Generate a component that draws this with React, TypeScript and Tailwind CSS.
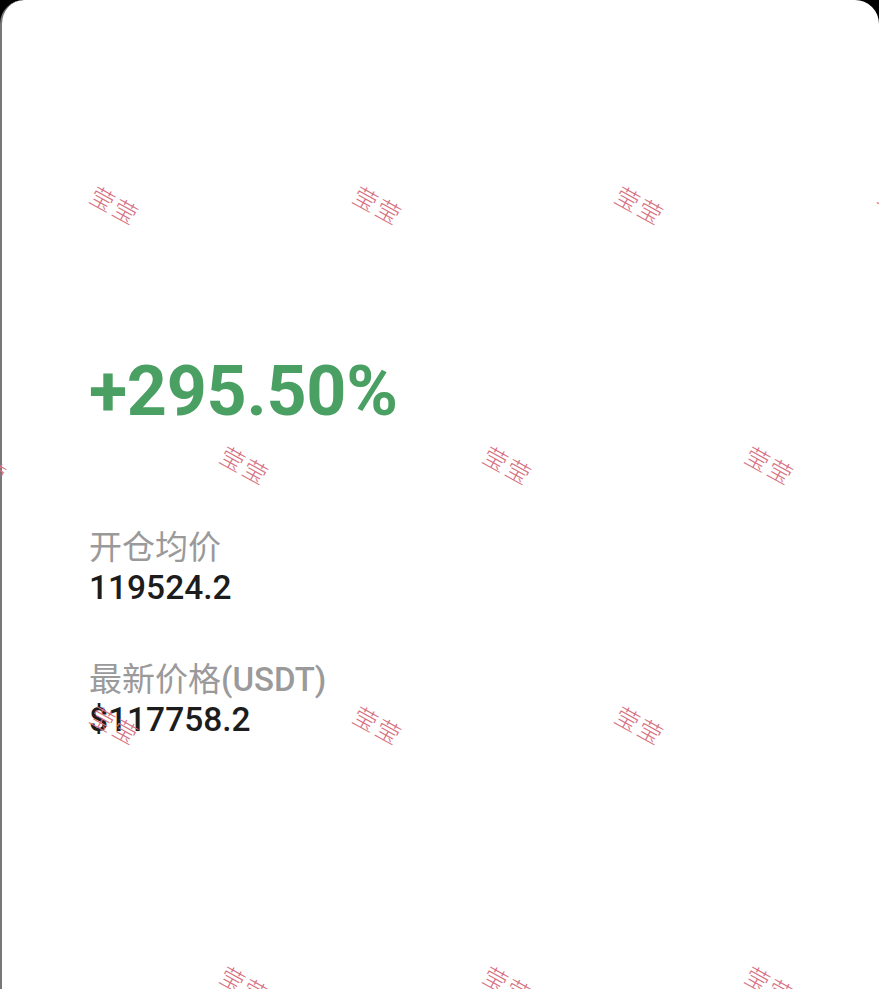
import React from "react";

const marks: [number, number][] = [
  [115, 205], [378, 205], [640, 205], [903, 205],
  [-17, 465], [245, 465], [508, 465], [770, 465],
  [115, 725], [378, 725], [640, 725],
  [245, 985], [508, 985], [770, 985],
];

export default function App() {
  return (
    <div className="relative w-[879px] h-[989px] bg-black overflow-hidden" style={{ fontFamily: "Roboto, 'Noto Sans CJK SC', sans-serif" }}>
      <div className="h-full bg-white rounded-t-[24px] border-l-2 border-[#777777] pl-[87px] pt-[356px]">
        <div className="text-[70px] leading-[70px] font-bold text-[#4a9f63] tracking-[-0.3px]">+295.50%</div>
        <div className="mt-[102px] flex flex-col">
          <div className="text-[33px] leading-[40px] text-[#9a9a9a]">开仓均价</div>
          <div className="text-[33.5px] leading-[40px] font-medium text-[#1c1c1c]">119524.2</div>
        </div>
        <div className="mt-[52px] flex flex-col">
          <div className="text-[33px] leading-[40px] text-[#9a9a9a]">
            最新价格<span className="font-medium">(USDT)</span>
          </div>
          <div className="text-[33.5px] leading-[40px] font-medium text-[#1c1c1c]">$117758.2</div>
        </div>
      </div>
      <div className="absolute inset-0 pointer-events-none">
        {marks.map(([x, y], i) => (
          <div
            key={i}
            className="absolute text-[24px] leading-none tracking-[2px] font-light text-[#d6707f] whitespace-nowrap"
            style={{ left: x, top: y, transform: "translate(-50%, -50%) rotate(29deg)", fontFamily: "'Noto Sans CJK SC', sans-serif" }}
          >
            莹莹
          </div>
        ))}
      </div>
    </div>
  );
}
